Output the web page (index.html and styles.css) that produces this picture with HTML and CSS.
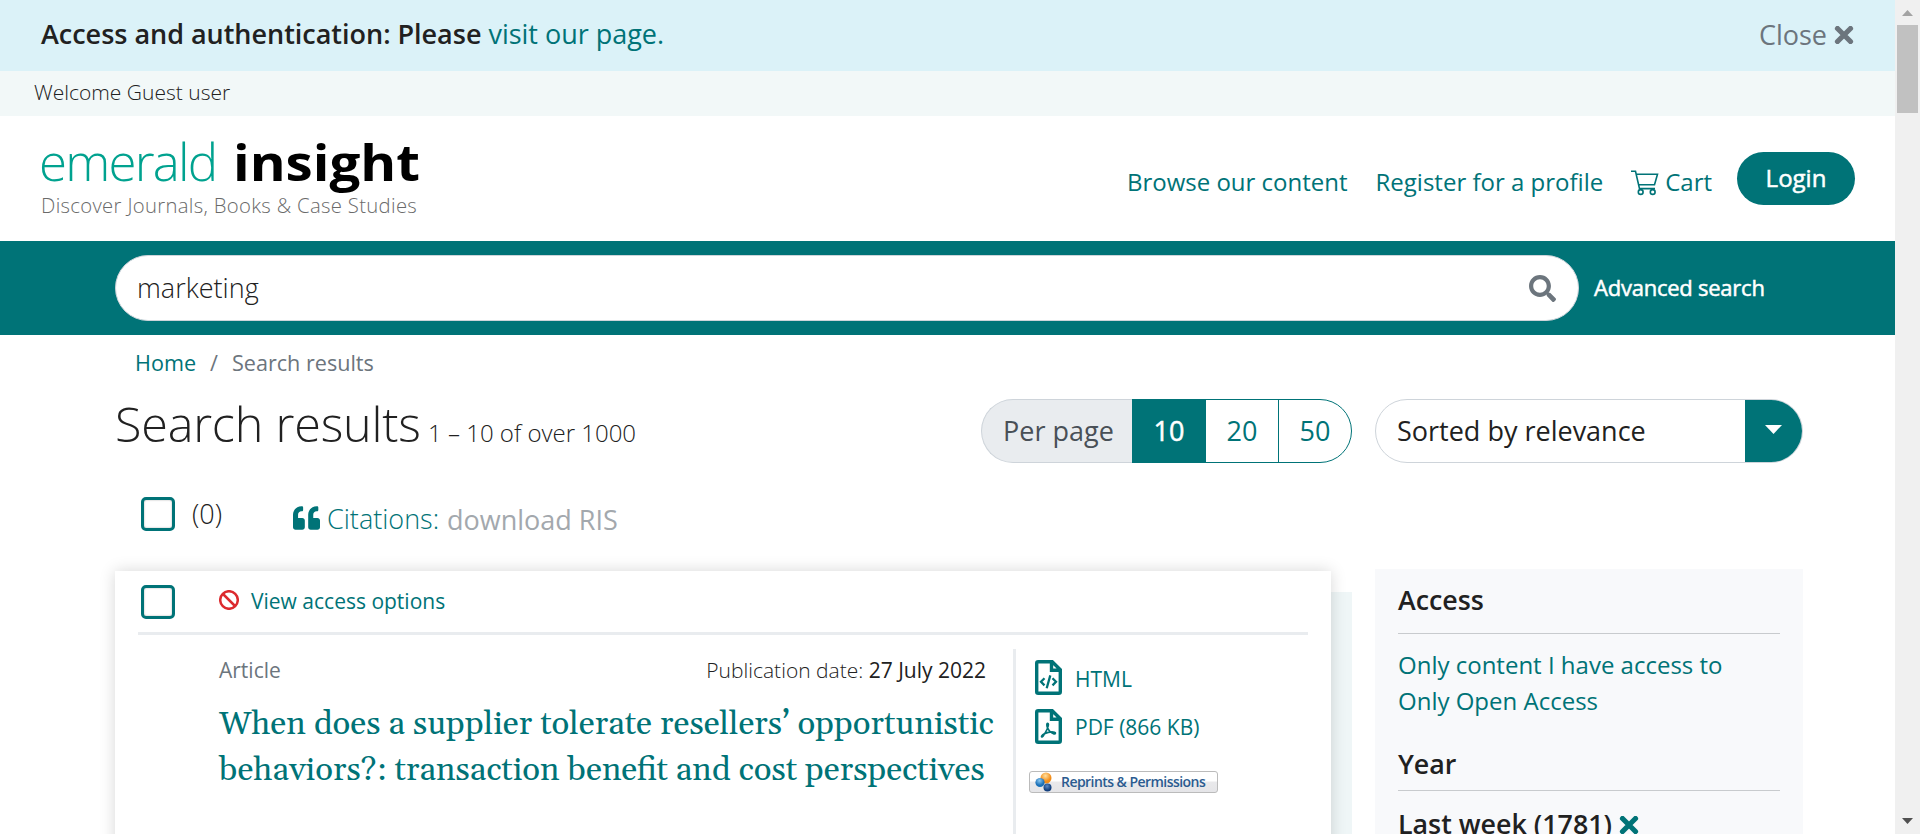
FILE: index.html
```html
<!DOCTYPE html>
<html lang="en">
<head>
<meta charset="utf-8">
<title>Search results | Emerald Insight</title>
<link rel="stylesheet" href="styles.css">
</head>
<body>
<div class="window">
<div class="page">
  <div class="banner">
    <p class="banner-text"><strong>Access and authentication: Please</strong> <a href="#">visit our page.</a></p>
    <button class="close">Close <svg class="times" viewBox="0 0 20 18"><path d="M3.5 2.5 16.5 15.5M16.5 2.5 3.5 15.5"/></svg></button>
  </div>
  <div class="welcome">Welcome Guest user</div>
  <header class="header">
    <div class="brand">
      <svg class="logo" viewBox="0 0 380 60"><text class="logo-a" x="-2" y="42.500" textLength="179">emerald</text><text class="logo-b" x="192" y="42.500" textLength="187" lengthAdjust="spacingAndGlyphs">insight</text></svg>
      <div class="tagline">Discover Journals, Books &amp; Case Studies</div>
    </div>
    <nav class="nav">
      <a href="#">Browse our content</a>
      <a href="#">Register for a profile</a>
      <a href="#" class="cart"><svg viewBox="0 0 28 26"><path d="M0 1.2H4.5L8.5 18.6H24M5.5 4.2H26.5L23.5 14.8H7.6"/><circle cx="9.7" cy="22" r="2.4"/><circle cx="21.7" cy="22" r="2.4"/></svg>Cart</a>
      <a href="#" class="login">Login</a>
    </nav>
  </header>
  <div class="searchbar">
    <div class="field"><span>marketing</span><svg viewBox="0 0 512 512"><path d="M505 442.700 405.300 343c-4.500-4.500-10.600-7-17-7H372c27.600-35.300 44-79.700 44-128C416 93.100 322.900 0 208 0S0 93.100 0 208s93.100 208 208 208c48.300 0 92.700-16.400 128-44v16.300c0 6.400 2.500 12.500 7 17l99.700 99.700c9.400 9.400 24.600 9.400 33.900 0l28.300-28.300c9.400-9.400 9.400-24.600.1-34zM208 336c-70.700 0-128-57.200-128-128 0-70.700 57.200-128 128-128 70.700 0 128 57.200 128 128 0 70.700-57.200 128-128 128z"/></svg></div>
    <a href="#">Advanced search</a>
  </div>
  <main class="container">
    <div class="crumbs"><a href="#">Home</a><span class="sep">/</span><span>Search results</span></div>
    <div class="titlebar">
      <h1>Search results <small>1 – 10 of over 1000</small></h1>
      <div class="pager"><span class="lab">Per page</span><a class="on">10</a><a>20</a><a class="last">50</a></div>
      <div class="sort"><span>Sorted by relevance</span><b><i></i></b></div>
    </div>
    <div class="tools">
      <span class="check"></span><span class="count">(0)</span>
      <svg class="quote" viewBox="0 0 512 448"><path d="M464 224h-80v-64c0-35.300 28.700-64 64-64h8c13.300 0 24-10.700 24-24V24c0-13.300-10.700-24-24-24h-8c-88.400 0-160 71.600-160 160v240c0 26.500 21.500 48 48 48h128c26.500 0 48-21.500 48-48V272c0-26.500-21.500-48-48-48zm-288 0H96v-64c0-35.300 28.700-64 64-64h8c13.300 0 24-10.700 24-24V24c0-13.300-10.700-24-24-24h-8C71.600 0 0 71.600 0 160v240c0 26.500 21.500 48 48 48h128c26.500 0 48-21.500 48-48V272c0-26.500-21.500-48-48-48z"/></svg>
      <span class="cite">Citations:</span><span class="ris">download RIS</span>
    </div>
    <div class="columns">
      <section class="results">
        <article class="card">
          <div class="card-top">
            <span class="check"></span>
            <svg class="ban" viewBox="0 0 20 20"><circle cx="10" cy="10" r="8.800"/><path d="M4 4 16 16"/></svg>
            <a href="#">View access options</a>
          </div>
          <div class="card-body">
            <div class="info">
              <div class="meta"><span class="type">Article</span><span class="date">Publication date: <b>27 July 2022</b></span></div>
              <h2>When does a supplier tolerate resellers’ opportunistic<br>behaviors?: transaction benefit and cost perspectives</h2>
            </div>
            <div class="links">
              <a href="#" class="html"><svg viewBox="0 0 27 35"><path class="o" d="M3.200 1.700H17.200L25.300 9.800V31.800Q25.300 33.300 23.800 33.300H3.200Q1.700 33.300 1.700 31.800V3.200Q1.700 1.700 3.200 1.700ZM16.500 2V10.300H25"/><path class="t" d="M9.500 18.200 6 21.800 9.500 25.400M17.500 18.200 21 21.800 17.500 25.400M15.300 15.400 11.700 28.300"/></svg>HTML</a>
              <a href="#"><svg viewBox="0 0 27 35"><path class="o" d="M3.200 1.700H17.200L25.300 9.800V31.800Q25.300 33.300 23.800 33.300H3.200Q1.700 33.300 1.700 31.800V3.200Q1.700 1.700 3.200 1.700ZM16.500 2V10.300H25"/><path class="p" d="M12.600 14.300C11.500 14.300 11.800 17 12.500 18.800C13.700 21.800 16 23.800 19 24.900C20.500 25.200 21 23.800 19.500 23.300C16 22.300 10.500 23.800 7.500 26C5.500 28 7 28.800 8.300 26.800C10.500 23.500 13.500 18.500 13.400 15.400Q13.300 14.300 12.600 14.300Z"/></svg>PDF (866 KB)</a>
              <div class="reprints">
                <svg viewBox="0 0 18 20"><defs><radialGradient id="go" cx=".45" cy=".3"><stop offset="0" stop-color="#ffe0a0"/><stop offset="1" stop-color="#f28c18"/></radialGradient><radialGradient id="gb" cx=".45" cy=".3"><stop offset="0" stop-color="#8cc8f0"/><stop offset="1" stop-color="#1a70b8"/></radialGradient><radialGradient id="gn" cx=".45" cy=".35"><stop offset="0" stop-color="#5a8ac8"/><stop offset="1" stop-color="#123f7e"/></radialGradient></defs><circle cx="11" cy="6" r="5.500" fill="url(#go)"/><circle cx="5" cy="10.500" r="4.600" fill="url(#gb)"/><circle cx="12.500" cy="15.500" r="4" fill="url(#gn)"/></svg>
                <span>Reprints &amp; Permissions</span>
              </div>
            </div>
          </div>
        </article>
      </section>
      <aside class="side">
        <h3>Access</h3>
        <a href="#">Only content I have access to</a>
        <a href="#">Only Open Access</a>
        <h3 class="year">Year</h3>
        <div class="week">Last week (1781) <svg class="times" viewBox="0 0 20 18"><path d="M3.500 2.500 16.500 15.500M16.500 2.500 3.500 15.500"/></svg></div>
      </aside>
    </div>
  </main>
</div>
<div class="scrollbar"><i class="up"></i><i class="thumb"></i><i class="down"></i></div>
</div>
</body>
</html>
```
FILE: styles.css
```css
*{box-sizing:border-box}
body{margin:0;font-family:"Open Sans",sans-serif;font-size:24px;line-height:36px;color:#212121;font-weight:300;background:#fff}
a{color:#007377;text-decoration:none;font-weight:400}
h1,h2,h3,p{margin:0;font-weight:300}
svg{display:block;flex:none}
.window{display:flex;width:1920px;height:834px;overflow:hidden}
.page{width:1895px;height:834px;overflow:hidden}
.banner{height:71px;background:#dbf2f8;display:flex;justify-content:space-between;padding:13px 41px 0 41px}
.banner-text{font-size:27px;line-height:41px;white-space:nowrap;letter-spacing:-.02px}
.banner-text strong{font-weight:600}
.close{display:flex;gap:7px;align-items:center;height:43px;border:0;padding:0;background:none;font:400 27px/43px "Open Sans",sans-serif;color:#6c757d}
.times{width:20px;height:18px;fill:none;stroke:currentColor;stroke-width:5.2;stroke-linecap:round}
.welcome{height:45px;background:#f2f8f8;padding:3px 0 0 34px;font-size:21px;white-space:nowrap}
.header{height:125px;display:flex;justify-content:space-between;padding:22px 40px 0 41px}
.brand{width:400px}
.logo{width:380px;height:60px;overflow:visible}
.logo-a{font:300 51px "Open Sans",sans-serif;fill:#00a28f}
.logo-b{font:700 50px "Open Sans",sans-serif;fill:#000}
.tagline{margin:-11px 0 0 0;font-size:20.300px;line-height:36px;letter-spacing:.32px;color:#6a6a6a;white-space:nowrap}
.nav{display:flex;gap:28px;height:53px;margin-top:14px;line-height:36px;white-space:nowrap}
.nav a{padding-top:12px}
.nav .cart{display:flex;gap:6px}
.cart svg{width:28px;height:26px;margin-top:6px;fill:none;stroke:#007377;stroke-width:1.600}
.nav .login{width:118px;height:53px;margin-left:-3px;border-radius:27px;background:#007377;color:#fff;text-align:center;padding-top:8px;-webkit-text-stroke:.5px #fff}
.searchbar{height:94px;background:#007377;padding:14px 0 0 115px;display:flex;gap:15px}
.field{width:1464px;height:66px;border-radius:33px;border:1px solid #ced4da;background:#fff;display:flex;justify-content:space-between;align-items:center;padding:0 22px 0 21px;font-size:27px}
.field svg{width:27px;height:27px;fill:#6c757d}
.searchbar a{color:#fff;-webkit-text-stroke:.5px #fff;font-size:22px;line-height:65px;letter-spacing:-.24px}
.container{padding:0 92px 0 115px}
.crumbs{height:50px;padding:10px 0 0 20px;display:flex;gap:14px;font-size:21.600px;color:#6c757d;font-weight:400}
.titlebar{height:64px;margin-top:14px;display:flex}
h1{width:866px;font-size:48.500px;line-height:48px;white-space:nowrap;letter-spacing:-.2px}
h1 small{font-size:24px;letter-spacing:0;margin-left:-5px}
.pager{display:flex;width:371px;height:64px;margin-right:23px;font-size:27px;line-height:61px;font-weight:400;text-align:center}
.lab{width:152px;padding-left:2px;border:1px solid #ced4da;border-right:0;border-radius:32px 0 0 32px;background:#e9ecef;color:#495057}
.pager a{width:73px;border:1px solid #007377;margin-left:-1px;flex:1}
.pager .on{background:#007377;color:#fff;-webkit-text-stroke:.5px #fff}
.pager .last{border-radius:0 32px 32px 0}
.sort{width:428px;height:64px;border:1px solid #ced4da;border-radius:32px;overflow:hidden;display:flex;justify-content:space-between;padding-left:21px;font-size:27px;line-height:61px;font-weight:400}
.sort b{width:57px;background:#007377;display:flex;justify-content:center;padding-top:25px}
.sort i{width:17px;height:9px;background:#fff;clip-path:polygon(0 0,100% 0,50% 100%)}
.tools{height:34px;margin-top:34px;padding-left:26px;display:flex;font-size:27px;line-height:36px;white-space:nowrap}
.check{width:34px;height:34px;border:3px solid #007377;border-radius:5px;background:#fff;box-shadow:inset 0 0 2px #aaa;flex:none}
.count{width:101px;margin:-1px 0 0 17px}
.quote{width:27px;height:24px;fill:#007377;margin:9px 7px 0 0}
.tools .cite{color:#007377;margin-top:4px;width:120px}
.tools .ris{color:#a3a8ad;font-weight:400;margin-top:5px}
.columns{display:flex;gap:23px;margin-top:38px}
.results{width:1237px;height:300px;padding:2px 21px 0 0;background:linear-gradient(#eff6f7,#eff6f7) 0 23px no-repeat}
.card{width:1216px;height:340px;background:#fff;box-shadow:0 0 15px rgba(0,0,0,.16);padding:0 23px}
.card-top{height:64px;border-bottom:3px solid #e9ecef;display:flex;padding:14px 3px 0;font-size:21px}
.ban{width:20px;height:20px;margin:5px 12px 0 44px;fill:none;stroke:#dc2a2e;stroke-width:2.500}
.card-top a{line-height:32px}
.card-body{display:flex;padding:14px 0 0 81px}
.info{width:794px;border-right:0}
.meta{display:flex;justify-content:space-between;font-size:21px;line-height:32px;padding:5px 27px 0 0}
.type{color:#6c757d;font-weight:400}
.date b{font-weight:400}
h2{font-family:Gelasio,Georgia,"Liberation Serif",serif;font-weight:400;font-size:32.950px;line-height:46px;margin-top:15px;color:#007377;white-space:nowrap}
.links{border-left:3px solid #e9ecef;height:220px;padding:11px 0 0 19px}
.links a{display:flex;gap:13px;height:49px;font-size:21px;line-height:37px}
.links .html{line-height:39px}
.links svg{width:27px;height:35px;fill:none;stroke:#007377}
.links .o{stroke-width:3.400}
.links .t{stroke-width:2.300}
.links .p{stroke-width:1.700}
.links .reprints{width:189px;height:22px;margin:13px 0 0 -6px;border:1px solid #bbb;border-radius:3px;background:linear-gradient(#fff 45%,#e9e9eb 50%,#e5e5e8);display:flex;align-items:center;gap:8px;padding-left:5px;font:600 14px/20px "Open Sans",sans-serif;color:#2b5b90;white-space:nowrap}
.reprints svg{width:18px;height:20px;stroke:none}
.reprints span{letter-spacing:-.55px}
.side{width:428px;height:300px;background:#f8f9fb;padding:13px 23px 0 23px}
.side h3{height:52px;border-bottom:1px solid #c8cbce;font-size:26.800px;font-weight:600;margin-bottom:13px}
.side a{display:block}
.side .year{margin:27px 0 15px;height:45px}
.week{font-size:26.800px;font-weight:600;display:flex;gap:7px;white-space:nowrap}
.week .times{color:#007377;margin-top:10px}
.scrollbar{width:25px;height:834px;background:#f0f0f0;display:flex;flex-direction:column;align-items:center}
.up{width:11px;height:6px;margin-top:10px;background:#a3a3a3;clip-path:polygon(50% 0,100% 100%,0 100%)}
.thumb{width:21px;height:88px;margin-top:9px;background:#c1c1c1}
.down{width:11px;height:6px;margin:auto 0 10px;background:#505050;clip-path:polygon(0 0,100% 0,50% 100%)}
```
